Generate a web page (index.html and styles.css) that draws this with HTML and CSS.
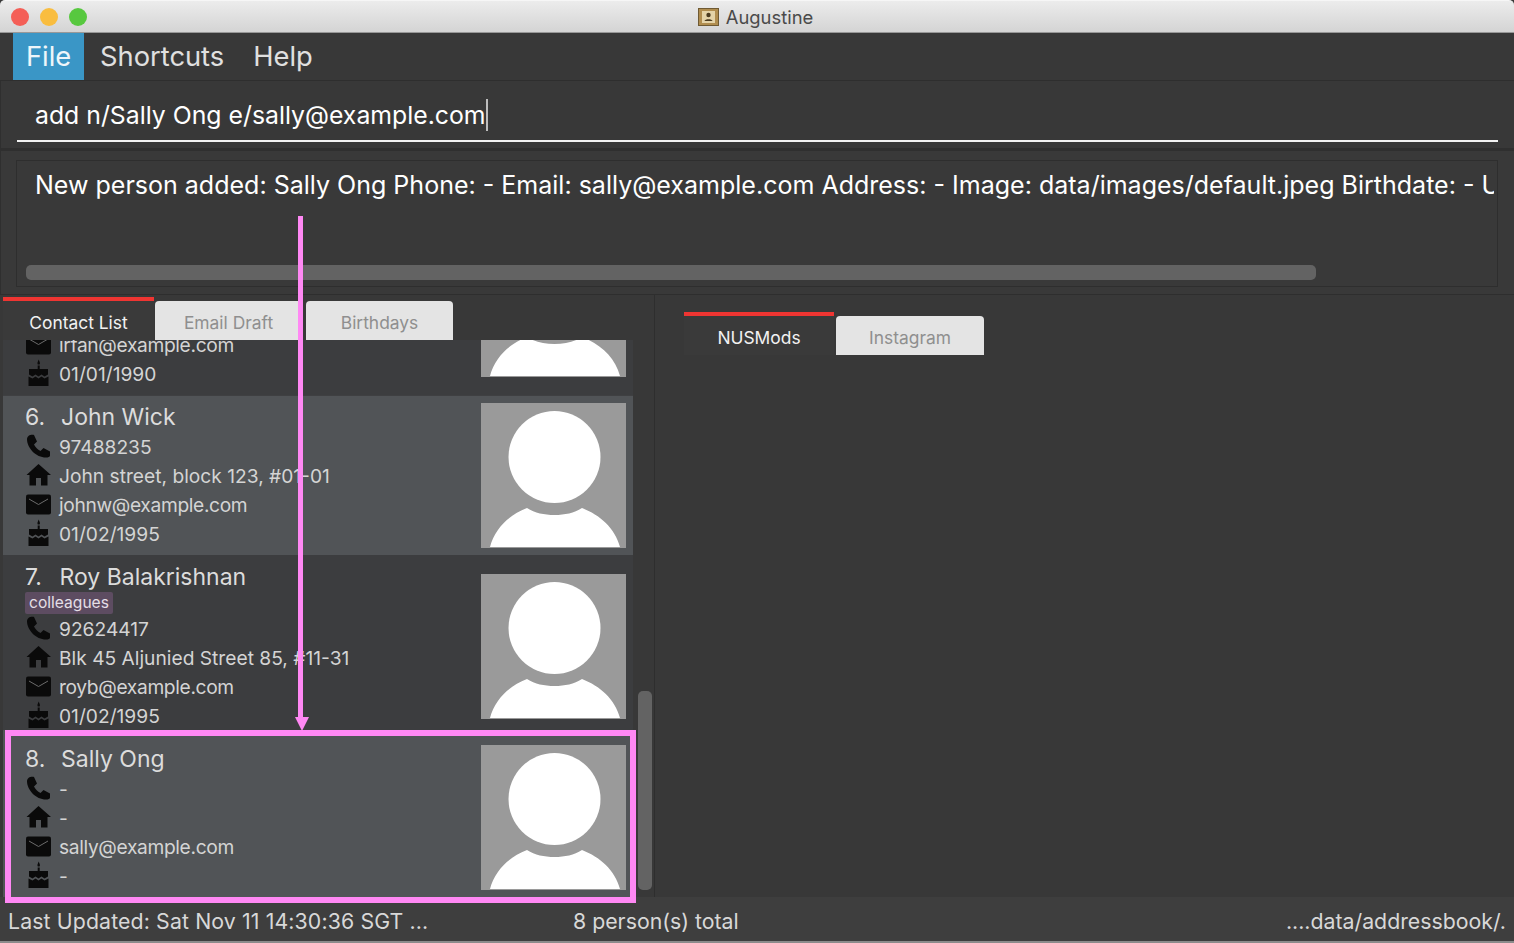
FILE: index.html
```html
<!DOCTYPE html>
<html>
<head>
    <meta charset="UTF-8">
    <title>Augustine</title>
    <link rel="stylesheet" href="styles.css">
</head>
<body>
    <svg class="defs" width="0" height="0">
        <symbol id="i-phone" viewBox="0 0 25 25">
            <path d="M3 1.500C4 .5 7.500 .5 8 1L11 7.500 8 10.500C9.500 13.500 11.500 15.500 14.500 17L17.500 14 24 17.500V21.500C24 23 22 23.500 20 23.500 10 23.500 1 14 1 5 1 3.500 2 2.500 3 1.500Z"/>
        </symbol>
        <symbol id="i-home" viewBox="0 0 25 25">
            <path d="M12.500 1 25 12H21.500V22.500H15V15H10V22.500H3.500V12H0.500Z"/>
        </symbol>
        <symbol id="i-mail" viewBox="0 0 25 25">
            <path d="M2 2.500H23Q25 2.500 25 4.500V20.500Q25 22.500 23 22.500H2Q0 22.500 0 20.500V4.500Q0 2.500 2 2.500Z"/>
            <path d="M3 7 12.500 12.500 22 7" fill="none" stroke="#6b6b6b" stroke-width="1"/>
        </symbol>
        <symbol id="i-cake" viewBox="0 0 25 29">
            <path d="M11.800 5.500C10.800 4 12 2.500 12.700 .5 13.400 2.500 14.600 4 13.600 5.500ZM11.700 6.500H13.700V10H11.700Z"/>
            <path d="M3 10H22V15.500L18.500 17.500 15.500 15.500 12.500 17.500 9.500 15.500 6.500 17.500 3 15.500Z"/>
            <path d="M2.500 17.500 6.500 19.500 9.500 17.500 12.500 19.500 15.500 17.500 18.500 19.500 22.500 17.500V27H2.500Z"/>
        </symbol>
        <symbol id="i-avatar" viewBox="0 0 145 145">
            <rect width="145" height="145" fill="#9a9a9a"/>
            <circle cx="73.500" cy="54" r="46" fill="#fff"/>
            <path d="M9 144C14 125 28 112 46 105 54 110 63 112 73.500 112 84 112 93 110 101 105 119 112 134 125 139 144Z" fill="#fff"/>
        </symbol>
    </svg>

    <div class="window">
        <div class="titlebar">
            <div class="lights">
                <span class="light red"></span>
                <span class="light yellow"></span>
                <span class="light green"></span>
            </div>
            <div class="title">
                <svg class="title-icon" width="21" height="18" viewBox="0 0 21 18">
                    <rect x="0.500" y="0.500" width="20" height="17" fill="#b08d4f" stroke="#6f5a33"/>
                    <rect x="4" y="3" width="13" height="12" fill="#e4d3a8"/>
                    <circle cx="10.500" cy="7" r="2.200" fill="#4a3b20"/>
                    <path d="M6.500 13C7 10.500 14 10.500 14.500 13Z" fill="#4a3b20"/>
                </svg>
                <span>Augustine</span>
            </div>
        </div>

        <div class="menubar">
            <span class="menu-item active">File</span>
            <span class="menu-item">Shortcuts</span>
            <span class="menu-item">Help</span>
        </div>

        <div class="command-pane">
            <div class="command-box"><span>add n/Sally Ong e/sally@example.com</span><i class="caret"></i></div>
        </div>

        <div class="result-pane">
            <div class="result-box">
                <div class="result-text">New person added: Sally Ong Phone: - Email: sally@example.com Address: - Image: data/images/default.jpeg Birthdate: - U</div>
                <div class="h-scroll"></div>
            </div>
        </div>

        <div class="main">
            <div class="left">
                <div class="tabs left-tabs">
                    <div class="tab selected wide">Contact List</div>
                    <div class="tab">Email Draft</div>
                    <div class="tab">Birthdays</div>
                </div>
                <div class="list-wrap">
                    <div class="list">
                        <div class="card clipped">
                            <div class="info">
                                <div class="row"><svg class="icon"><use href="#i-mail"/></svg><span class="email">irfan@example.com</span></div>
                                <div class="row"><svg class="icon cake"><use href="#i-cake"/></svg><span>01/01/1990</span></div>
                            </div>
                            <svg class="avatar"><use href="#i-avatar"/></svg>
                        </div>
                        <div class="card light-card c6">
                            <div class="info">
                                <div class="name"><span class="num">6.</span>John Wick</div>
                                <div class="row"><svg class="icon"><use href="#i-phone"/></svg><span>97488235</span></div>
                                <div class="row"><svg class="icon"><use href="#i-home"/></svg><span>John street, block 123, #01-01</span></div>
                                <div class="row"><svg class="icon"><use href="#i-mail"/></svg><span class="email">johnw@example.com</span></div>
                                <div class="row"><svg class="icon cake"><use href="#i-cake"/></svg><span>01/02/1995</span></div>
                            </div>
                            <svg class="avatar"><use href="#i-avatar"/></svg>
                        </div>
                        <div class="card c7">
                            <div class="info">
                                <div class="name"><span class="num n7">7.</span>Roy Balakrishnan</div>
                                <div class="tags"><span class="tag">colleagues</span></div>
                                <div class="row"><svg class="icon"><use href="#i-phone"/></svg><span>92624417</span></div>
                                <div class="row"><svg class="icon"><use href="#i-home"/></svg><span>Blk 45 Aljunied Street 85, #11-31</span></div>
                                <div class="row"><svg class="icon"><use href="#i-mail"/></svg><span class="email">royb@example.com</span></div>
                                <div class="row"><svg class="icon cake"><use href="#i-cake"/></svg><span>01/02/1995</span></div>
                            </div>
                            <svg class="avatar"><use href="#i-avatar"/></svg>
                        </div>
                        <div class="card light-card c8">
                            <div class="info">
                                <div class="name"><span class="num">8.</span>Sally Ong</div>
                                <div class="row"><svg class="icon"><use href="#i-phone"/></svg><span>-</span></div>
                                <div class="row"><svg class="icon"><use href="#i-home"/></svg><span>-</span></div>
                                <div class="row"><svg class="icon"><use href="#i-mail"/></svg><span class="email">sally@example.com</span></div>
                                <div class="row"><svg class="icon cake"><use href="#i-cake"/></svg><span>-</span></div>
                            </div>
                            <svg class="avatar"><use href="#i-avatar"/></svg>
                        </div>
                    </div>
                    <div class="v-track"><div class="v-scroll"></div></div>
                </div>
            </div>
            <div class="right">
                <div class="tabs right-tabs">
                    <div class="tab selected">NUSMods</div>
                    <div class="tab">Instagram</div>
                </div>
            </div>
        </div>

        <div class="statusbar">
            <span class="status-left">Last Updated: Sat Nov 11 14:30:36 SGT ...</span>
            <span class="status-mid">8 person(s) total</span>
            <span class="status-right">....data/addressbook/.</span>
        </div>
    </div>

    <!-- annotation drawn over the screenshot -->
    <div class="mark-box"></div>
    <div class="mark-line"></div>
    <div class="mark-head"></div>
</body>
</html>
```

FILE: styles.css
```css
* {
    box-sizing: border-box;
}
html, body {
    margin: 0;
    padding: 0;
    height: 943px;
    overflow: hidden;
    background-color: #383838;
}
body {
    font-family: 'Inter', 'Liberation Sans', sans-serif;
    position: relative;
}
.defs {
    position: absolute;
}
.window {
    display: flex;
    flex-direction: column;
    height: 943px;
}

/* title bar */
.titlebar {
    height: 33px;
    flex: none;
    display: flex;
    align-items: center;
    justify-content: center;
    position: relative;
    background: linear-gradient(#ececec, #d4d4d4);
    border-top: 1px solid #f6f6f6;
    border-bottom: 1px solid #989898;
    border-radius: 5px 5px 0 0;
}
.lights {
    position: absolute;
    left: 11px;
    top: 7px;
    display: flex;
    gap: 11px;
}
.light {
    width: 18px;
    height: 18px;
    border-radius: 50%;
}
.red { background-color: #f45f57; }
.yellow { background-color: #f9bd3f; }
.green { background-color: #57c83f; }
.title {
    display: flex;
    align-items: center;
    gap: 7px;
    font-size: 18.400px;
    color: #4a4a4a;
    margin: 1px 3px 0 0;
}

/* menu */
.menubar {
    height: 48px;
    flex: none;
    display: flex;
    padding-left: 13px;
    background-color: #383838;
    border-bottom: 1px solid #2e2e2e;
}
.menu-item {
    font-size: 27.300px;
    color: #e0e0e0;
    padding: 0 13px 0 16px;
    line-height: 48px;
    height: 47px;
}
.menu-item.active {
    width: 71px;
    padding: 0 0 0 13px;
    background-color: #3a96c6;
    color: #eef6fa;
}

/* command box */
.command-pane {
    height: 70px;
    flex: none;
    padding: 0 16px 0 17px;
    background-color: #383838;
    border-bottom: 3px solid #2f2f2f;
    border-left: 1px solid #2f2f2f;
}
.command-box {
    height: 61px;
    display: flex;
    align-items: center;
    padding: 8px 0 0 18px;
    margin-left: -1px;
    border-bottom: 2px solid #f2f2f2;
    font-size: 24.800px;
    color: #fff;
}
.caret {
    width: 2px;
    height: 32px;
    background-color: #bdbdbd;
}

/* result box */
.result-pane {
    height: 144px;
    flex: none;
    padding: 9px 16px 7px;
    background-color: #393939;
    border-bottom: 1px solid #2e2e2e;
    border-left: 1px solid #2f2f2f;
}
.result-box {
    height: 127px;
    margin-left: -1px;
    border: 1px solid #2e2e2e;
    padding: 8px 0 0 18px;
    position: relative;
    overflow: hidden;
}
.result-text {
    font-size: 25.030px;
    line-height: 32px;
    color: #fff;
    white-space: nowrap;
    overflow: hidden;
    margin-right: 3px;
}
.h-scroll {
    position: absolute;
    left: 9px;
    bottom: 6px;
    width: 1290px;
    height: 15px;
    border-radius: 5px;
    background-color: #636363;
}

/* split panes */
.main {
    flex: 1;
    min-height: 0;
    display: flex;
}
.left {
    width: 655px;
    flex: none;
    display: flex;
    flex-direction: column;
    border-right: 1px solid #2e2e2e;
    padding: 2px 0 0 3px;
}
.right {
    flex: 1;
    padding: 17px 0 0 29px;
}
.tabs {
    display: flex;
    gap: 2px;
    flex: none;
}
.left-tabs {
    height: 43px;
}
.right-tabs {
    height: 43px;
}
.tab {
    width: 147px;
    height: 39px;
    margin-top: 4px;
    padding-top: 3px;
    border-radius: 4px 4px 0 0;
    background-color: #e4e4e4;
    color: #8f8f8f;
    font-size: 17.400px;
    display: flex;
    align-items: center;
    justify-content: center;
}
.left-tabs .tab:nth-child(2) {
    margin-left: -1px;
    margin-right: 2px;
}
.right-tabs .tab:nth-child(2) {
    width: 148px;
}
.tab.selected {
    width: 150px;
    height: 43px;
    margin-top: 0;
    padding-top: 3px;
    background-color: #3a3a3a;
    border-top: 4px solid #ef3532;
    border-radius: 0;
    color: #f2f2f2;
}
.left-tabs .tab.selected {
    width: 151px;
}

/* contact list */
.list-wrap {
    flex: 1;
    min-height: 0;
    display: flex;
}
.list {
    width: 630px;
    flex: none;
    overflow: hidden;
    background-color: #3c3d3f;
}
.v-track {
    flex: 1;
    padding: 351px 0 0 5px;
}
.v-scroll {
    width: 14px;
    height: 199px;
    border-radius: 5px;
    background-color: #636363;
}
.card {
    display: flex;
    justify-content: space-between;
    padding-right: 7px;
    color: #d4d4d4;
    font-size: 19.200px;
    overflow: hidden;
}
.light-card {
    background-color: #515457;
}
.clipped {
    height: 56px;
    align-items: flex-end;
    border-bottom: 1px solid #3f4042;
    padding-bottom: 7px;
}
.clipped .avatar {
    margin: 0 0 11px;
    flex: none;
}
.c6 {
    height: 159px;
    padding-top: 7px;
}
.c7 {
    height: 175px;
    padding-top: 19px;
}
.c8 {
    height: 167px;
    padding-top: 15px;
}
.info {
    padding-left: 22px;
}
.name {
    font-size: 23px;
    line-height: 29px;
    height: 29px;
    color: #dcdcdc;
    display: flex;
}
.c7 .name {
    margin-top: -11px;
}
.num {
    width: 36px;
}
.num.n7 {
    width: 34.500px;
}
.row {
    height: 29px;
    display: flex;
    align-items: center;
    gap: 8px;
}
.icon {
    width: 25px;
    height: 25px;
    margin-left: 1px;
    fill: #0a0a0a;
    flex: none;
}
.icon.cake {
    height: 29px;
}
.email {
    letter-spacing: -0.350px;
}
.avatar {
    width: 145px;
    height: 145px;
    flex: none;
}
.tags {
    height: 22px;
    display: flex;
    align-items: center;
}
.tag {
    font-size: 15.600px;
    line-height: 22px;
    padding: 0 4px;
    border-radius: 2px;
    background-color: #5d4c61;
    color: #e4dfe6;
}

/* status bar */
.statusbar {
    height: 46px;
    flex: none;
    display: grid;
    grid-template-columns: 565px 1fr auto;
    align-items: center;
    padding: 3px 8px 0;
    font-size: 21.300px;
    color: #d8d8d8;
    background-color: #3e3e3e;
    border-bottom: 2px solid #8b8b8b;
}
.status-left {
    letter-spacing: 0.120px;
}

/* pink annotation */
.mark-box {
    position: absolute;
    left: 5px;
    top: 730px;
    width: 631px;
    height: 173px;
    border: 6px solid #ff88f4;
}
.mark-line {
    position: absolute;
    left: 298px;
    top: 216px;
    width: 5px;
    height: 504px;
    background-color: #ff88f4;
}
.mark-head {
    position: absolute;
    left: 295px;
    top: 717px;
    width: 0;
    height: 0;
    border-left: 7.500px solid transparent;
    border-right: 7.500px solid transparent;
    border-top: 14px solid #ff88f4;
}
```
